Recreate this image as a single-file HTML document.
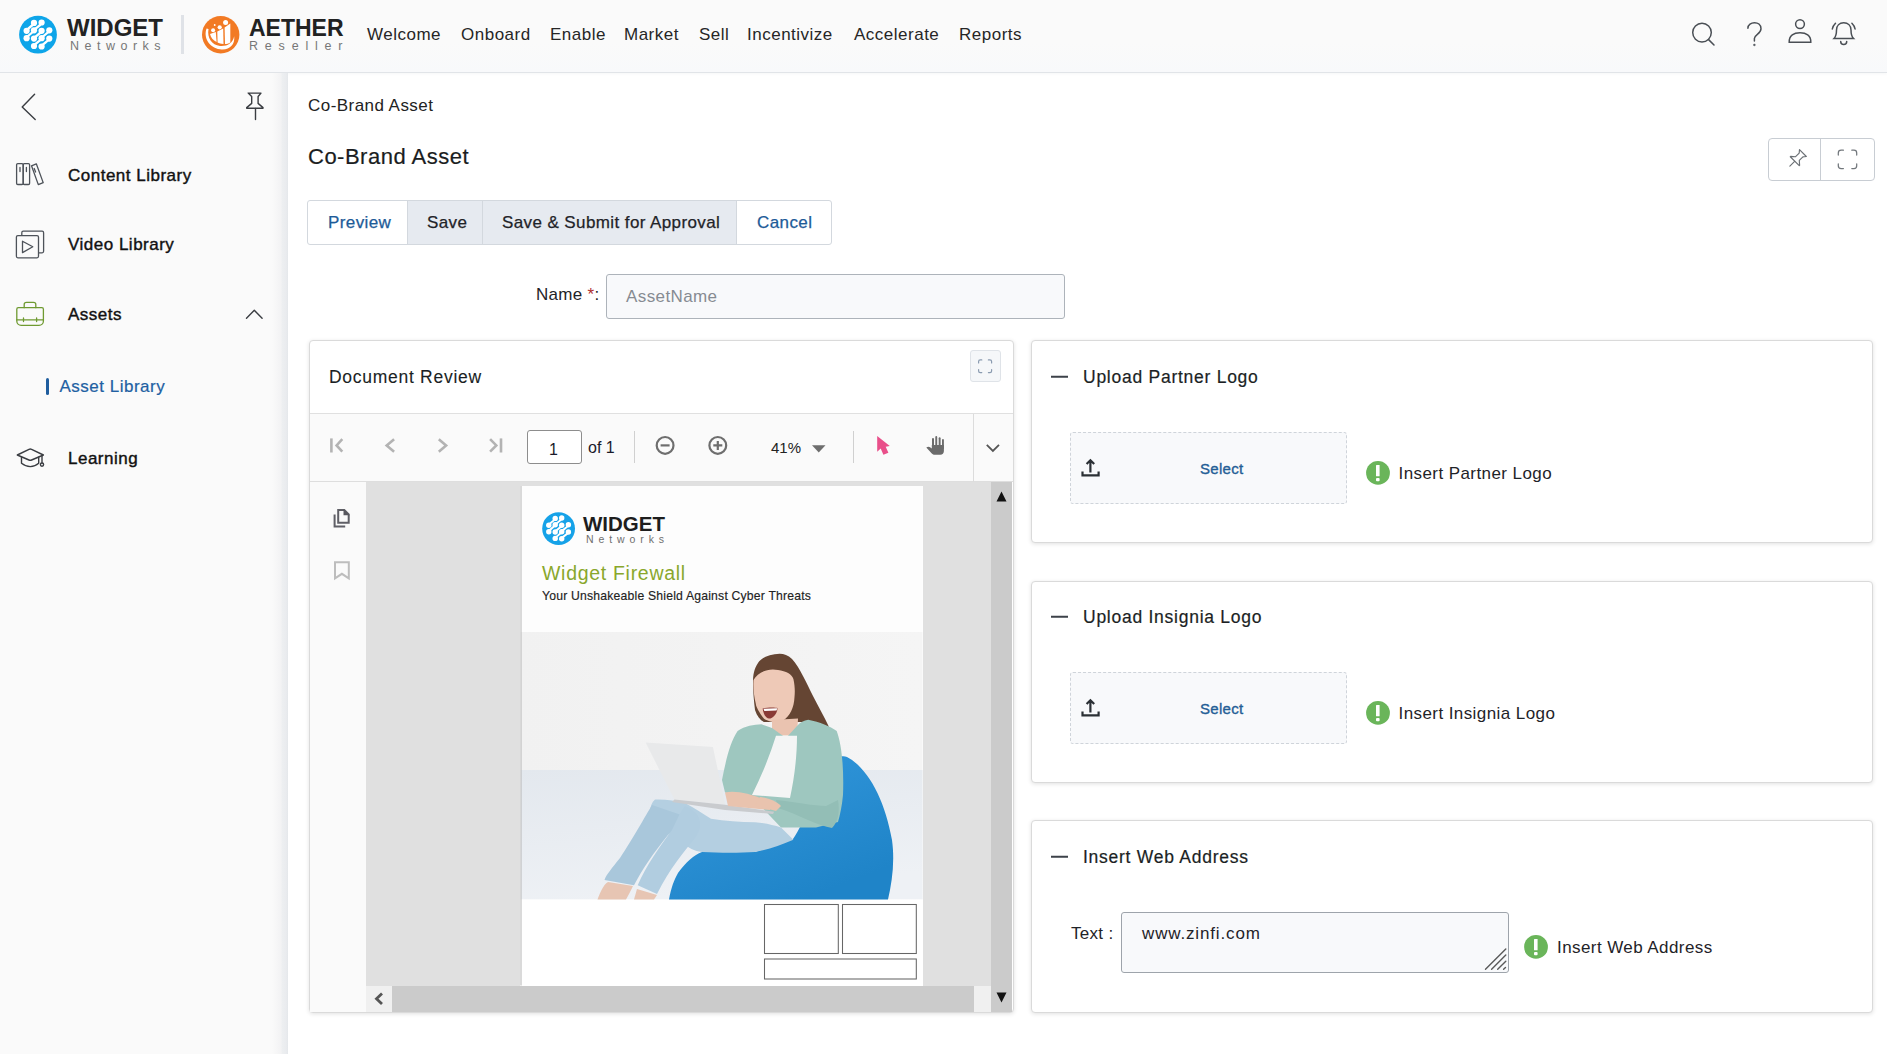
<!DOCTYPE html>
<html><head><meta charset="utf-8">
<style>
*{box-sizing:border-box;margin:0;padding:0}
html,body{width:1887px;height:1054px;overflow:hidden;background:#fff;font-family:"Liberation Sans",sans-serif;color:#212529}
.a{position:absolute;white-space:nowrap;line-height:1}
.b{position:absolute}
#hdr{position:absolute;left:0;top:0;width:1887px;height:73px;background:linear-gradient(#fafafa 0%,#fafafa 60%,#f8f9fb 100%);border-bottom:1px solid #e1e4e8;box-shadow:0 1px 3px rgba(20,40,80,0.04)}
.nav{font-size:17px;letter-spacing:0.5px;color:#262626;top:26px}
#side{position:absolute;left:0;top:73px;width:288px;height:981px;background:#fafafa}
#side .sh{position:absolute;right:0;top:0;width:16px;height:100%;background:linear-gradient(to right,rgba(250,250,250,0) 0%,#f3f3f4 55%,#edeff1 64%,#e9ebee 90%,#e4e7ea 100%)}
.si{font-size:17px;letter-spacing:0.5px;color:#111;-webkit-text-stroke:0.4px #111}
.panel{position:absolute;background:#fff;border:1px solid #dadada;border-radius:4px;box-shadow:0 1px 4px rgba(0,0,0,0.12)}
.ptitle{font-size:17.5px;letter-spacing:0.74px;color:#1b1f24;-webkit-text-stroke:0.2px #1b1f24}
.selbox{position:absolute;background:#f8f9fb;border:1px dashed #cfd4da;border-radius:3px}
.seltxt{font-size:15px;letter-spacing:0.3px;color:#245e96;-webkit-text-stroke:0.35px #245e96}
.ins{font-size:17px;letter-spacing:0.42px;color:#1f2328}
svg.ov{position:absolute;left:0;top:0;overflow:visible}
</style></head><body>
<div id="hdr">
  <div class="a" style="left:67px;top:16px;font-size:24px;font-weight:bold;color:#222">WIDGET</div>
  <div class="a" style="left:70px;top:39.5px;font-size:12.5px;letter-spacing:5.5px;color:#777">Networks</div>
  <div class="b" style="left:181px;top:15px;width:3px;height:39px;background:#dfe2e7"></div>
  <div class="a" style="left:249px;top:17px;font-size:23px;font-weight:bold;color:#222">AETHER</div>
  <div class="a" style="left:249px;top:39.5px;font-size:12.5px;letter-spacing:6.8px;color:#777">Reseller</div>
  <div class="a nav" style="left:367px">Welcome</div>
  <div class="a nav" style="left:461px">Onboard</div>
  <div class="a nav" style="left:550px">Enable</div>
  <div class="a nav" style="left:624px">Market</div>
  <div class="a nav" style="left:699px">Sell</div>
  <div class="a nav" style="left:747px">Incentivize</div>
  <div class="a nav" style="left:854px">Accelerate</div>
  <div class="a nav" style="left:959px">Reports</div>
</div>
<div id="side"><div class="sh"></div></div>
<div class="a si" style="left:68px;top:167px">Content Library</div>
<div class="a si" style="left:68px;top:236px">Video Library</div>
<div class="a si" style="left:68px;top:306px">Assets</div>
<div class="b" style="left:46px;top:378px;width:3px;height:17px;background:#1f5d9e;border-radius:1.5px"></div>
<div class="a" style="left:59.5px;top:378px;font-size:17px;letter-spacing:0.5px;color:#2160a2;-webkit-text-stroke:0.2px #2160a2">Asset Library</div>
<div class="a si" style="left:68px;top:450px">Learning</div>

<!-- content -->
<div class="a" style="left:308px;top:97px;font-size:17px;letter-spacing:0.45px;color:#222">Co-Brand Asset</div>
<div class="a" style="left:308px;top:146px;font-size:22px;letter-spacing:0.5px;color:#1a1d21;-webkit-text-stroke:0.2px #1a1d21">Co-Brand Asset</div>

<div class="b" style="left:1768px;top:138px;width:107px;height:43px;border:1px solid #c8cdd3;border-radius:4px;background:#fff"></div>
<div class="b" style="left:1820px;top:139px;width:1px;height:41px;background:#c8cdd3"></div>

<!-- button group -->
<div class="b" style="left:307px;top:200px;width:525px;height:45px;border:1px solid #d3d8de;border-radius:3px;background:#fff"></div>
<div class="b" style="left:407px;top:201px;width:75px;height:43px;background:#e6eaf0;border-left:1px solid #d3d8de"></div>
<div class="b" style="left:482px;top:201px;width:255px;height:43px;background:#e6eaf0;border-left:1px solid #d3d8de;border-right:1px solid #d3d8de"></div>
<div class="a" style="left:328px;top:214px;font-size:17px;letter-spacing:0.4px;color:#1d5b98;-webkit-text-stroke:0.25px #1d5b98">Preview</div>
<div class="a" style="left:427px;top:214px;font-size:17px;letter-spacing:0.4px;color:#1f2328;-webkit-text-stroke:0.25px #1f2328">Save</div>
<div class="a" style="left:502px;top:214px;font-size:17px;letter-spacing:0.4px;color:#1f2328;-webkit-text-stroke:0.25px #1f2328">Save &amp; Submit for Approval</div>
<div class="a" style="left:757px;top:214px;font-size:17px;letter-spacing:0.4px;color:#1d5b98;-webkit-text-stroke:0.25px #1d5b98">Cancel</div>

<div class="a" style="left:536px;top:286px;font-size:17px;letter-spacing:0.3px;color:#1f2328">Name <span style="color:#b03030">*</span>:</div>
<div class="b" style="left:606px;top:274px;width:459px;height:45px;border:1px solid #adb3ba;border-radius:3px;background:#f8f9fb"></div>
<div class="a" style="left:626px;top:288px;font-size:17px;letter-spacing:0.4px;color:#868b92">AssetName</div>

<!-- doc review panel -->
<div class="panel" style="left:309px;top:340px;width:705px;height:673px"></div>
<div class="a" style="left:329px;top:368.5px;font-size:17.5px;letter-spacing:0.72px;color:#1b1f24;-webkit-text-stroke:0.1px #1b1f24">Document Review</div>
<div class="b" style="left:970px;top:350px;width:31px;height:32px;border:1px solid #dfe3e8;border-radius:3px;background:#f5f7f9"></div>
<div class="b" style="left:310px;top:413px;width:703px;height:69px;background:#fafafa;border-top:1px solid #e0e0e0;border-bottom:1px solid #dedede"></div>
<div class="b" style="left:973px;top:414px;width:1px;height:68px;background:#dcdcdc"></div>
<div class="b" style="left:634px;top:431px;width:1px;height:32px;background:#d0d0d0"></div>
<div class="b" style="left:853px;top:431px;width:1px;height:32px;background:#d0d0d0"></div>
<div class="b" style="left:527px;top:430px;width:55px;height:34px;border:1px solid #8d8d8d;border-radius:3px;background:#fff"></div>
<div class="a" style="left:549px;top:442px;font-size:16px;color:#1a1a2a">1</div>
<div class="a" style="left:588px;top:440px;font-size:16px;color:#1a1a2a">of 1</div>
<div class="a" style="left:771px;top:440px;font-size:15px;color:#222">41%</div>
<!-- viewer -->
<div class="b" style="left:310px;top:482px;width:56px;height:530px;background:#fafafa"></div>
<div class="b" style="left:366px;top:482px;width:625px;height:504px;background:#e0e0e0"></div>
<div class="b" style="left:991px;top:482px;width:21px;height:530px;background:#cbcbcb"></div>
<div class="b" style="left:366px;top:986px;width:625px;height:26px;background:#f0f0f0"></div>
<div class="b" style="left:392px;top:986px;width:582px;height:26px;background:#cbcbcb"></div>
<div id="page" class="b" style="left:520px;top:486px;width:403px;height:500px;background:#fff;overflow:hidden"></div>

<!-- right panels -->
<div class="panel" style="left:1031px;top:340px;width:842px;height:203px"></div>
<div class="panel" style="left:1031px;top:581px;width:842px;height:202px"></div>
<div class="panel" style="left:1031px;top:820px;width:842px;height:193px"></div>
<div class="a ptitle" style="left:1083px;top:369px">Upload Partner Logo</div>
<div class="a ptitle" style="left:1083px;top:609px">Upload Insignia Logo</div>
<div class="a ptitle" style="left:1083px;top:849px">Insert Web Address</div>
<div class="selbox" style="left:1070px;top:432px;width:277px;height:72px"></div>
<div class="selbox" style="left:1070px;top:672px;width:277px;height:72px"></div>
<div class="a seltxt" style="left:1200px;top:461px">Select</div>
<div class="a seltxt" style="left:1200px;top:701px">Select</div>
<div class="a ins" style="left:1398.5px;top:464.5px">Insert Partner Logo</div>
<div class="a ins" style="left:1398.5px;top:704.5px">Insert Insignia Logo</div>
<div class="a" style="left:1071px;top:925px;font-size:17px;letter-spacing:0.3px;color:#1f2328">Text :</div>
<div class="b" style="left:1121px;top:912px;width:388px;height:61px;border:1px solid #9ea4ab;border-radius:3px;background:#f8f9fb"></div>
<div class="a" style="left:1142px;top:925px;font-size:17px;letter-spacing:0.85px;color:#1f2328">www.zinfi.com</div>
<div class="a ins" style="left:1557px;top:938.5px">Insert Web Address</div>

<svg class="ov" width="1887" height="1054" viewBox="0 0 1887 1054" fill="none">
<!-- widget logo -->
<circle cx="38" cy="34.7" r="18.9" fill="#0ea5e9"/>
<g stroke="#fff" stroke-width="2.3" stroke-linecap="round">
<path d="M41.6 22.5 C40 27 36 27 34 30.3 C32 34 28 34.5 26.6 38.2"/>
<path d="M49.3 30.3 C47.5 34.5 43.5 34.5 41.6 38.2 C39.5 42 36 42 34 46"/>
<path d="M34 22.9 C32 27 28.5 27 26.6 30.8"/>
<path d="M41.6 30.8 C39.8 34.8 36 35 34 38.6"/>
<path d="M49.3 38.6 C47.5 42.5 43.5 42.5 41.6 46.5"/>
</g>
<g fill="#fff">
<circle cx="34" cy="22.9" r="3.1"/><circle cx="41.6" cy="22.5" r="3.1"/>
<circle cx="26.6" cy="30.8" r="3.1"/><circle cx="34" cy="30.3" r="3.1"/><circle cx="41.6" cy="30.8" r="3.1"/><circle cx="49.3" cy="30.3" r="3.1"/>
<circle cx="26.6" cy="38.2" r="3.1"/><circle cx="34" cy="38.6" r="3.1"/><circle cx="41.6" cy="38.2" r="3.1"/><circle cx="49.3" cy="38.6" r="3.1"/>
<circle cx="34" cy="46" r="3.1"/><circle cx="41.6" cy="46.5" r="3.1"/>
</g>
<!-- aether logo -->
<circle cx="220.7" cy="34.7" r="18.7" fill="#f27a24"/>
<path d="M206.6 28.5 C203.2 37 208.8 47.8 220 49.3 C229.2 50.6 235.2 45 234.2 36.3 C232.8 43.3 227 46.6 220 46 C211.8 45 206.9 38 208.5 29 Z" fill="#fff"/>
<path d="M210 34 L215.8 32 L216.6 42 C213 40.5 210.8 37.5 210 34 Z" fill="#fff"/>
<path d="M217.3 31.5 L223.2 28.5 L223.5 44 C221 44 219 43.5 217.6 42.6 Z" fill="#fff"/>
<path d="M224.6 27.5 L230.3 23.5 L230.3 42.5 C228.5 43.6 226.8 44 225 44 Z" fill="#fff"/>
<circle cx="213.1" cy="30.3" r="2" fill="#fff"/><circle cx="219.7" cy="27.3" r="2.1" fill="#fff"/><circle cx="225.6" cy="22.5" r="2.5" fill="#fff"/><circle cx="214.7" cy="25" r="0.9" fill="#fff"/>

<!-- header icons -->
<g stroke="#4a4f55" stroke-width="1.5" fill="none" stroke-linecap="round">
<circle cx="1702" cy="32.6" r="9.3"/>
<path d="M1708.6 39.6 L1714 45"/>
<path d="M1747.9 28.2 C1748 21 1761 20.5 1761 28.8 C1761 34 1754.4 34.5 1754.4 38.5 L1754.4 41"/>
<circle cx="1754.4" cy="45" r="0.4"/>
<circle cx="1800" cy="24.1" r="4.4"/>
<path d="M1789.2 42.3 C1789 35 1794 32.8 1800 32.8 C1806 32.8 1811 35 1810.8 42.3 Z"/>
<path d="M1834 38.6 C1836.5 36 1836.5 33 1836.5 30 C1836.5 25.5 1839.5 22.7 1843.7 22.7 C1848 22.7 1851 25.5 1851 30 C1851 33 1851 36 1853.6 38.6 Z"/>
<path d="M1840.7 41.5 A3 3 0 0 0 1846.7 41.5"/>
<path d="M1835.5 23.3 C1833.8 25 1832.6 26.8 1832.3 29"/>
<path d="M1851.9 23.3 C1853.6 25 1854.8 26.8 1855.1 29"/>
</g>

<!-- sidebar icons -->
<g stroke="#3a3d42" stroke-width="1.4" fill="none" stroke-linecap="round" stroke-linejoin="round">
<path d="M34.6 94.2 L22.2 107 L35.2 119.6"/>
<path d="M248.2 93.1 L261 93.1 L258.1 96.5 L258.1 103.4 L263 107.6 L263 108.3 L246.7 108.3 L246.7 107.6 L251.7 103.4 L251.7 96.5 Z"/>
<path d="M255.5 108.5 L255.5 119.6"/>
</g>
<g stroke="#4d5259" stroke-width="1.3" fill="none" stroke-linejoin="round" stroke-linecap="round">
<rect x="16.6" y="163.6" width="6.6" height="20.9" rx="1.2"/>
<rect x="23.2" y="163.6" width="6.4" height="20.9" rx="1.2"/>
<path d="M20 167.5 L20 171.5 M26.4 167.5 L26.4 171.5"/>
<path d="M31.5 165.8 L36.3 163.8 L43.2 182.6 L38.3 184.6 Z"/>
<path d="M34.2 168.5 L35.6 172"/>
<rect x="21.8" y="231.2" width="21.8" height="21.6" rx="1.5"/>
<rect x="16.4" y="235.6" width="22.1" height="22.2" rx="1.5" fill="#fafafa"/>
<path d="M22.5 241.2 L32.8 246.8 L22.5 252.6 Z"/>
</g>
<g stroke="#6f9a31" stroke-width="1.3" fill="none" stroke-linejoin="round" stroke-linecap="round">
<path d="M24.2 307.7 L24.2 304.5 C24.2 303 25 302.4 26.5 302.4 L33.5 302.4 C35 302.4 35.8 303 35.8 304.5 L35.8 307.7"/>
<path d="M18.3 307.7 L41.9 307.7 C42.8 307.7 43.4 308.3 43.4 309.2 L43.4 321 C43.4 323.5 41.5 325.4 39 325.4 L21.2 325.4 C18.7 325.4 16.8 323.5 16.8 321 L16.8 309.2 C16.8 308.3 17.4 307.7 18.3 307.7 Z"/>
<path d="M16.8 319.9 L43.4 319.9 M23.5 318 L23.5 321.6 M36.6 318 L36.6 321.6"/>
</g>
<g stroke="#3a3d42" stroke-width="1.4" fill="none" stroke-linejoin="round" stroke-linecap="round">
<path d="M246.5 318.2 L254.3 310.3 L262.1 318.2"/>
<path d="M17.3 455 L29 449.3 C29.8 448.9 30.8 448.9 31.6 449.3 L43.4 455 L31.6 460 C30.8 460.4 29.8 460.4 29 460 Z"/>
<path d="M21.5 457.3 L21.5 463.3 C24 465.3 27 466.6 30.3 466.6 C33.6 466.6 36.5 465.3 38.7 463.3 L38.7 457.3"/>
<path d="M42 456 L42 462.8"/>
<circle cx="42" cy="464.6" r="1.6"/>
</g>

<!-- pin / fullscreen top right -->
<g stroke="#6b7075" stroke-width="1.3" fill="#fff" stroke-linejoin="round" stroke-linecap="round">
<g transform="rotate(45 1797 159) translate(1797 159) scale(0.88) translate(-1797 -159)">
<path d="M1791.5 149.5 L1802.5 149.5 L1800 152.5 L1800 158.3 L1804.2 162 L1804.2 162.6 L1789.8 162.6 L1789.8 162 L1794 158.3 L1794 152.5 Z"/>
<path d="M1797 162.8 L1797 170.5" fill="none"/>
</g>
</g>
<g stroke="#72777c" stroke-width="1.25" fill="none" stroke-linecap="round">
<path d="M1838.3 155 L1838.3 153 C1838.3 151.2 1839.5 150.2 1841.2 150.2 L1843.4 150.2"/>
<path d="M1851.8 150.2 L1854 150.2 C1855.7 150.2 1856.7 151.2 1856.7 153 L1856.7 155"/>
<path d="M1838.3 163.8 L1838.3 165.8 C1838.3 167.6 1839.5 168.6 1841.2 168.6 L1843.4 168.6"/>
<path d="M1851.8 168.6 L1854 168.6 C1855.7 168.6 1856.7 167.6 1856.7 165.8 L1856.7 163.8"/>
</g>


<!-- document page -->
<defs>
<clipPath id="pg"><rect x="520.5" y="486" width="402.2" height="499.5"/></clipPath>
<linearGradient id="wall" x1="0" y1="0" x2="1" y2="0"><stop offset="0" stop-color="#f1f1f1"/><stop offset="1" stop-color="#f5f5f5"/></linearGradient>
<linearGradient id="floor" x1="0" y1="0" x2="0.3" y2="1"><stop offset="0" stop-color="#e3e8ee"/><stop offset="1" stop-color="#eef1f5"/></linearGradient>
<linearGradient id="bag" x1="0" y1="0" x2="0.6" y2="1"><stop offset="0" stop-color="#3499de"/><stop offset="1" stop-color="#1f84c8"/></linearGradient>
</defs>
<g clip-path="url(#pg)">
<rect x="520.5" y="486" width="402.2" height="146" fill="#fdfdfd"/>
<rect x="520.5" y="632" width="402.2" height="267.5" fill="url(#wall)"/>
<rect x="520.5" y="770" width="402.2" height="129.5" fill="url(#floor)"/>
<rect x="520.5" y="899.5" width="402.2" height="90" fill="#fff"/>
<!-- beanbag -->
<path d="M669 899.5 C671 888 674 880 678 873 C686 862 694 855 702 852 L755 852 L793 839 C805 822 815 790 830 765 C836 757 842 755 847 757 C868 768 885 800 892 840 C895 862 892 882 888 899.5 Z" fill="url(#bag)"/>
<!-- hair -->
<path d="M779.7 653.7 C770 654 762 657 758 663 C754 669 753 675 753 682 C753 692 754 702 755 710 C757 716 760 720 764 722 L808 722 C815 723 822 725 829 727 C824 716 818 706 813 696 C806 682 800 668 792 659 C788 655 784 653.7 779.7 653.7 Z" fill="#654533"/>
<!-- face -->
<path d="M753.5 680 C758 672 768 668 778 670 C786 671 792 674 793.4 679 C795 686 795 692 794.5 697 C794 708 790 716 783 720.5 C779 722.5 775 722.5 772.9 722 C768 721 765 720 763.8 718.6 C759 712 756 707 755.8 703.8 C754 696 753 688 753.5 680 Z" fill="#eec9b7"/>
<path d="M762.6 708.5 C767 707.5 774 707 777.6 708 C777 714 773 718.6 769 718.6 C765.5 718 763.5 714 762.6 708.5 Z" fill="#8a3a35"/>
<path d="M763.5 708.7 L777.4 708.2 L776.5 710.5 L764.3 711 Z" fill="#fff"/>
<path d="M772 720 L798 718.5 L797 735.5 L772 735.5 Z" fill="#eac3b0"/>
<!-- shirt -->
<path d="M737.6 731 C745 726 754 724.5 761.5 724.3 L772 728 L786 738 L797 726 C800 722 804 720.5 808.2 719.7 C820 722 830 726 836.7 731 C842 745 844 770 843 795 C842 806 840 815 838 822 L816 827.4 L781 827.4 L755 800 L725 792.5 L722 780 C726 760 730 742 737.6 731 Z" fill="#9ec7bf"/>
<path d="M776 735.7 L797 735.7 C797 758 794 780 790 798 L752 795 C762 775 770 755 776 735.7 Z" fill="#f4f5f5"/>
<!-- jeans -->
<path d="M655 799.5 C665 799 676 801 685 803 C695 808 703 814 711 818.7 C725 821 740 822 755 822.2 C765 823 773 825 781 827.4 L793.4 839.7 C780 845 768 850 754.9 852 C740 853 720 853 702.4 852 C694 851 688 848 684 843 C676 838 662 827 652 818 C649 812 650 804 655 799.5 Z" fill="#b4cfe1"/>
<path d="M652 805 C646 815 632 840 620 858 C612 868 606 875 604.5 880 L634 885.2 C642 870 654 852 668 835 L690 818 Z" fill="#a9c7db"/>
<path d="M685 806 C700 812 705 825 695 838 C684 852 670 868 657 894 L637.7 885.2 C646 866 660 846 672 830 C676 822 680 812 685 806 Z" fill="#b1cde0"/>
<path d="M597.5 899.5 C600 893 603 885 608 882 L633 886 C630 892 628 896 626 899.5 Z" fill="#e7c5b3"/>
<path d="M637 889 L657 895 L654 899.5 L634 899.5 Z" fill="#e7c5b3"/>
<!-- laptop -->
<path d="M645.6 742.6 L712.9 747 L725.2 804.7 L674.4 799.5 Z" fill="#e8e9ea"/>
<path d="M674.4 799.5 L725.2 804.7 L774.1 811.7 L773 814 L725 810 L672 802 Z" fill="#c9cbce"/>
<path d="M725 792.5 C738 790 755 795 772.4 803 L770 810 L728 806 Z" fill="#e9c3ae"/>
<path d="M838 800 C840 812 838 822 832 828 C818 826 800 815 778 808 L776 800 C795 802 815 806 826 806 Z" fill="#93beb6"/>
<path d="M760 797 C768 798 776 801 781 806 L776 811 C768 809 760 807 755 805 Z" fill="#e9c3ae"/>
<!-- page texts frame -->
<g stroke="#666" stroke-width="1.05" fill="none">
<rect x="764.5" y="904.5" width="73.8" height="49"/>
<rect x="842.5" y="904.5" width="73.8" height="49"/>
<rect x="764.5" y="959" width="151.8" height="20"/>
</g>
<!-- page logo -->
<circle cx="558.6" cy="528.6" r="16.4" fill="#16a2e8"/>
<g stroke="#fff" stroke-width="2" stroke-linecap="round">
<path d="M561.7 518 C560.3 522 556.9 522 555.2 524.8 C553.5 528 550 528.5 548.8 531.7"/>
<path d="M568.4 524.8 C566.8 528.5 563.4 528.5 561.7 531.7 C559.9 535 556.9 535 555.2 538.4"/>
<path d="M555.2 518.4 C553.5 522 550.4 522 548.8 525.2"/>
<path d="M561.7 525.2 C560.1 528.7 556.9 528.9 555.2 532"/>
<path d="M568.4 532 C566.8 535.4 563.4 535.4 561.7 538.8"/>
</g>
<g fill="#fff">
<circle cx="555.2" cy="518.4" r="2.7"/><circle cx="561.7" cy="518" r="2.7"/>
<circle cx="548.8" cy="525.2" r="2.7"/><circle cx="555.2" cy="524.8" r="2.7"/><circle cx="561.7" cy="525.2" r="2.7"/><circle cx="568.4" cy="524.8" r="2.7"/>
<circle cx="548.8" cy="531.7" r="2.7"/><circle cx="555.2" cy="532" r="2.7"/><circle cx="561.7" cy="531.7" r="2.7"/><circle cx="568.4" cy="532" r="2.7"/>
<circle cx="555.2" cy="538.4" r="2.7"/><circle cx="561.7" cy="538.8" r="2.7"/>
</g>
</g>
<path d="M521 486 L521 985.5" stroke="#b5b5b5" stroke-width="1"/>

<!-- doc review fullscreen small -->
<g stroke="#8a9bb0" stroke-width="1.2" fill="none" stroke-linecap="round">
<path d="M978.6 363 L978.6 361.5 C978.6 360.5 979.3 359.9 980.3 359.9 L981.8 359.9"/>
<path d="M988.4 359.9 L989.9 359.9 C990.9 359.9 991.6 360.5 991.6 361.5 L991.6 363"/>
<path d="M978.6 369.5 L978.6 371 C978.6 372 979.3 372.6 980.3 372.6 L981.8 372.6"/>
<path d="M988.4 372.6 L989.9 372.6 C990.9 372.6 991.6 372 991.6 371 L991.6 369.5"/>
</g>
<!-- toolbar nav -->
<g stroke="#b3b3b3" stroke-width="2.6" fill="none" stroke-linecap="butt" stroke-linejoin="miter">
<path d="M331.4 438.4 L331.4 452.5"/>
<path d="M342.3 439.2 L336.6 445.4 L342.3 451.7"/>
<path d="M394.1 439.2 L386.7 445.4 L394.1 451.7"/>
<path d="M438.8 439.2 L446.1 445.4 L438.8 451.7"/>
<path d="M490.1 439.2 L496.3 445.4 L490.1 451.7"/>
<path d="M501 438.4 L501 452.5"/>
</g>
<g stroke="#6e6e6e" stroke-width="2.2" fill="none">
<circle cx="665.1" cy="445.4" r="8.4"/>
<path d="M660.6 445.4 L669.6 445.4"/>
<circle cx="717.8" cy="445.4" r="8.4"/>
<path d="M713.3 445.4 L722.3 445.4 M717.8 440.9 L717.8 449.9"/>
</g>
<path d="M812 445.2 L825.5 445.2 L818.75 452.5 Z" fill="#6e6e6e"/>
<path d="M877.2 436 L877.2 451.7 L880.7 448.4 L883.4 454.8 L888.4 452.7 L885.7 446.7 L889.8 446 Z" fill="#e94f8a"/>
<g fill="#6b6b6b">
<rect x="932" y="438.1" width="2" height="10" rx="1"/>
<rect x="935.3" y="436" width="1.9" height="11" rx="0.95"/>
<rect x="938.7" y="437.2" width="1.9" height="10" rx="0.95"/>
<rect x="942" y="439.1" width="1.9" height="10" rx="0.95"/>
<path d="M931.8 445 L943.9 445 L943.9 451 C943.9 453.2 942.5 454.8 940.3 454.8 L935 454.8 C933.5 454.8 932.6 454.2 931.8 453.4 L926.3 447.6 C927.5 446.7 929 446.4 930.4 447.4 L931.8 448.5 Z"/>
</g>
<path d="M986.8 444.9 L992.9 451 L999 444.9" stroke="#555" stroke-width="1.8" fill="none"/>
<!-- thumbnails -->
<g stroke="#5f5f66" stroke-width="2" fill="none" stroke-linejoin="miter">
<path d="M334.6 514.4 L334.6 526.4 L345.2 526.4"/>
<path d="M338.2 510.1 L344.3 510.1 L348.7 514.4 L348.7 522.8 L338.2 522.8 Z"/>
</g>
<path d="M343.5 509 L349.8 515.2 L343.5 515.2 Z" fill="#58585f"/>
<path d="M335 562.3 L348.8 562.3 L348.8 578.3 L341.9 573.8 L335 578.3 Z" stroke="#bdbdbd" stroke-width="2" fill="none"/>
<!-- scrollbar arrows -->
<path d="M996.5 501.5 L1006.5 501.5 L1001.5 491.5 Z" fill="#111"/>
<path d="M996.5 992.5 L1006.5 992.5 L1001.5 1002.5 Z" fill="#111"/>
<path d="M382 993.5 L376.5 998.8 L382 1004" stroke="#555" stroke-width="2.8" fill="none"/>

<!-- right panels -->
<g stroke="#3d4249" stroke-width="2">
<path d="M1051 376.7 L1068 376.7 M1051 616.7 L1068 616.7 M1051 856.7 L1068 856.7"/>
</g>
<g stroke="#2b3035" stroke-width="2.2" fill="none" stroke-linecap="butt" stroke-linejoin="miter">
<path d="M1086.6 464 L1090.4 460.2 L1094.2 464 M1090.4 460.5 L1090.4 472.6"/>
<path d="M1082.5 471.6 L1082.5 475.4 L1098.6 475.4 L1098.6 471.6"/>
<path d="M1086.6 704 L1090.4 700.2 L1094.2 704 M1090.4 700.5 L1090.4 712.6"/>
<path d="M1082.5 711.6 L1082.5 715.4 L1098.6 715.4 L1098.6 711.6"/>
</g>
<g fill="#6ab55a">
<circle cx="1378" cy="472.9" r="11.9"/>
<circle cx="1378" cy="712.9" r="11.9"/>
<circle cx="1536" cy="946.9" r="11.9"/>
</g>
<g fill="#fff">
<rect x="1376" y="465" width="3.6" height="11.3" rx="0.5"/><rect x="1376" y="477.9" width="3.6" height="3.3" rx="1"/>
<rect x="1376" y="705" width="3.6" height="11.3" rx="0.5"/><rect x="1376" y="717.9" width="3.6" height="3.3" rx="1"/>
<rect x="1534" y="939" width="3.6" height="11.3" rx="0.5"/><rect x="1534" y="951.9" width="3.6" height="3.3" rx="1"/>
</g>
<g stroke="#5a5a5a" stroke-width="1.4" stroke-linecap="round">
<path d="M1485.5 969.3 L1505.8 949 M1491.6 969.3 L1505.8 955.1 M1497.7 969.3 L1505.8 961.2 M1503.6 969.3 L1505.5 967.4"/>
</g>
</svg>
<div class="a" style="left:583px;top:513.5px;font-size:20.5px;font-weight:bold;color:#1e1e1e">WIDGET</div>
<div class="a" style="left:586px;top:533.5px;font-size:10.5px;letter-spacing:4.9px;color:#6f6f6f">Networks</div>
<div class="a" style="left:542px;top:564px;font-size:19.5px;letter-spacing:0.7px;color:#89a72c">Widget Firewall</div>
<div class="a" style="left:542px;top:589.5px;font-size:12.2px;letter-spacing:0.2px;color:#222;-webkit-text-stroke:0.15px #222">Your Unshakeable Shield Against Cyber Threats</div>
</body></html>
